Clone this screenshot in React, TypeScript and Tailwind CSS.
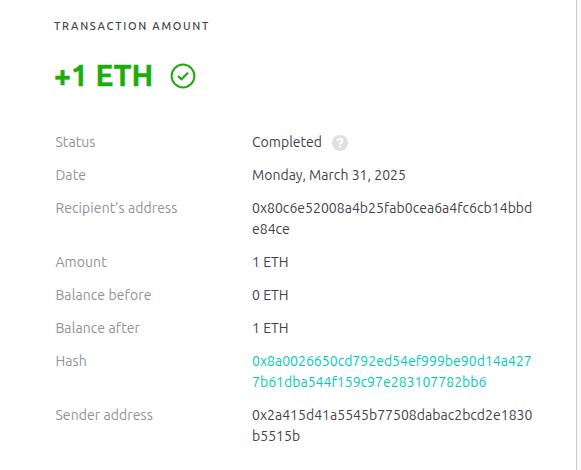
import type { ReactNode } from "react";

const rows: { label: string; value: ReactNode; valueClass?: string }[] = [
    {
        label: "Status",
        value: (
            <span className="flex items-center">
                Completed
                <HelpIcon />
            </span>
        ),
    },
    { label: "Date", value: "Monday, March 31, 2025" },
    { label: "Recipient’s address", value: "0x80c6e52008a4b25fab0cea6a4fc6cb14bbde84ce" },
    { label: "Amount", value: "1 ETH" },
    { label: "Balance before", value: "0 ETH" },
    { label: "Balance after", value: "1 ETH" },
    {
        label: "Hash",
        value: "0x8a0026650cd792ed54ef999be90d14a4277b61dba544f159c97e283107782bb6",
        valueClass: "text-[#00cdb8]",
    },
    { label: "Sender address", value: "0x2a415d41a5545b77508dabac2bcd2e1830b5515b" },
];

function HelpIcon() {
    return (
        <svg className="mt-px ml-2.5 size-4" viewBox="0 0 16 16" fill="none">
            <circle cx="8" cy="8" r="8" fill="#dfe0e2" />
            <path d="M5.5 6.2c0-1.4 1.1-2.2 2.5-2.2s2.5.8 2.5 2c0 1.6-2.4 1.7-2.4 3.4" stroke="#fff" strokeWidth="2" />
            <circle cx="8.1" cy="11.8" r="1.2" fill="#fff" />
        </svg>
    );
}

function CheckIcon() {
    return (
        <svg className="size-[26px]" viewBox="0 0 26 26" fill="none" stroke="#1dac0c">
            <circle cx="13" cy="13" r="11.4" strokeWidth="2" />
            <path d="M8 13.2l3.5 3 6.4-6.4" strokeWidth="2.2" />
        </svg>
    );
}

export default function App() {
    return (
        <div className="flex h-[470px] w-[581px] bg-white font-['Ubuntu','Noto_Sans',sans-serif] text-[#434349]">
            <div className="w-[576px] pt-[18px] pl-[54px]">
                <h2 className="text-[11px] leading-4 font-medium tracking-[1.7px] uppercase">Transaction amount</h2>
                <div className="mt-6 flex h-9 items-center gap-[17px]">
                    <span className="w-[99px] pb-0.5 text-[30px] leading-9 font-bold tracking-[0.15px] whitespace-nowrap text-[#1dac0c] [-webkit-text-stroke:0.4px_#1dac0c]">
                        +1 ETH
                    </span>
                    <CheckIcon />
                </div>
                <dl className="mt-[38px] ml-[1.4px] flex flex-col gap-3 text-sm leading-[21px]">
                    {rows.map((row) => (
                        <div key={row.label} className="flex">
                            <dt className="w-[196.6px] shrink-0 tracking-[0.09px] text-[#929297]">{row.label}</dt>
                            <dd className={`w-[283px] tracking-[0.03px] break-all ${row.valueClass ?? ""}`}>{row.value}</dd>
                        </div>
                    ))}
                </dl>
            </div>
            <div className="w-[5px] border-l border-[#cdcdcd] bg-[#fafafa]" />
        </div>
    );
}
